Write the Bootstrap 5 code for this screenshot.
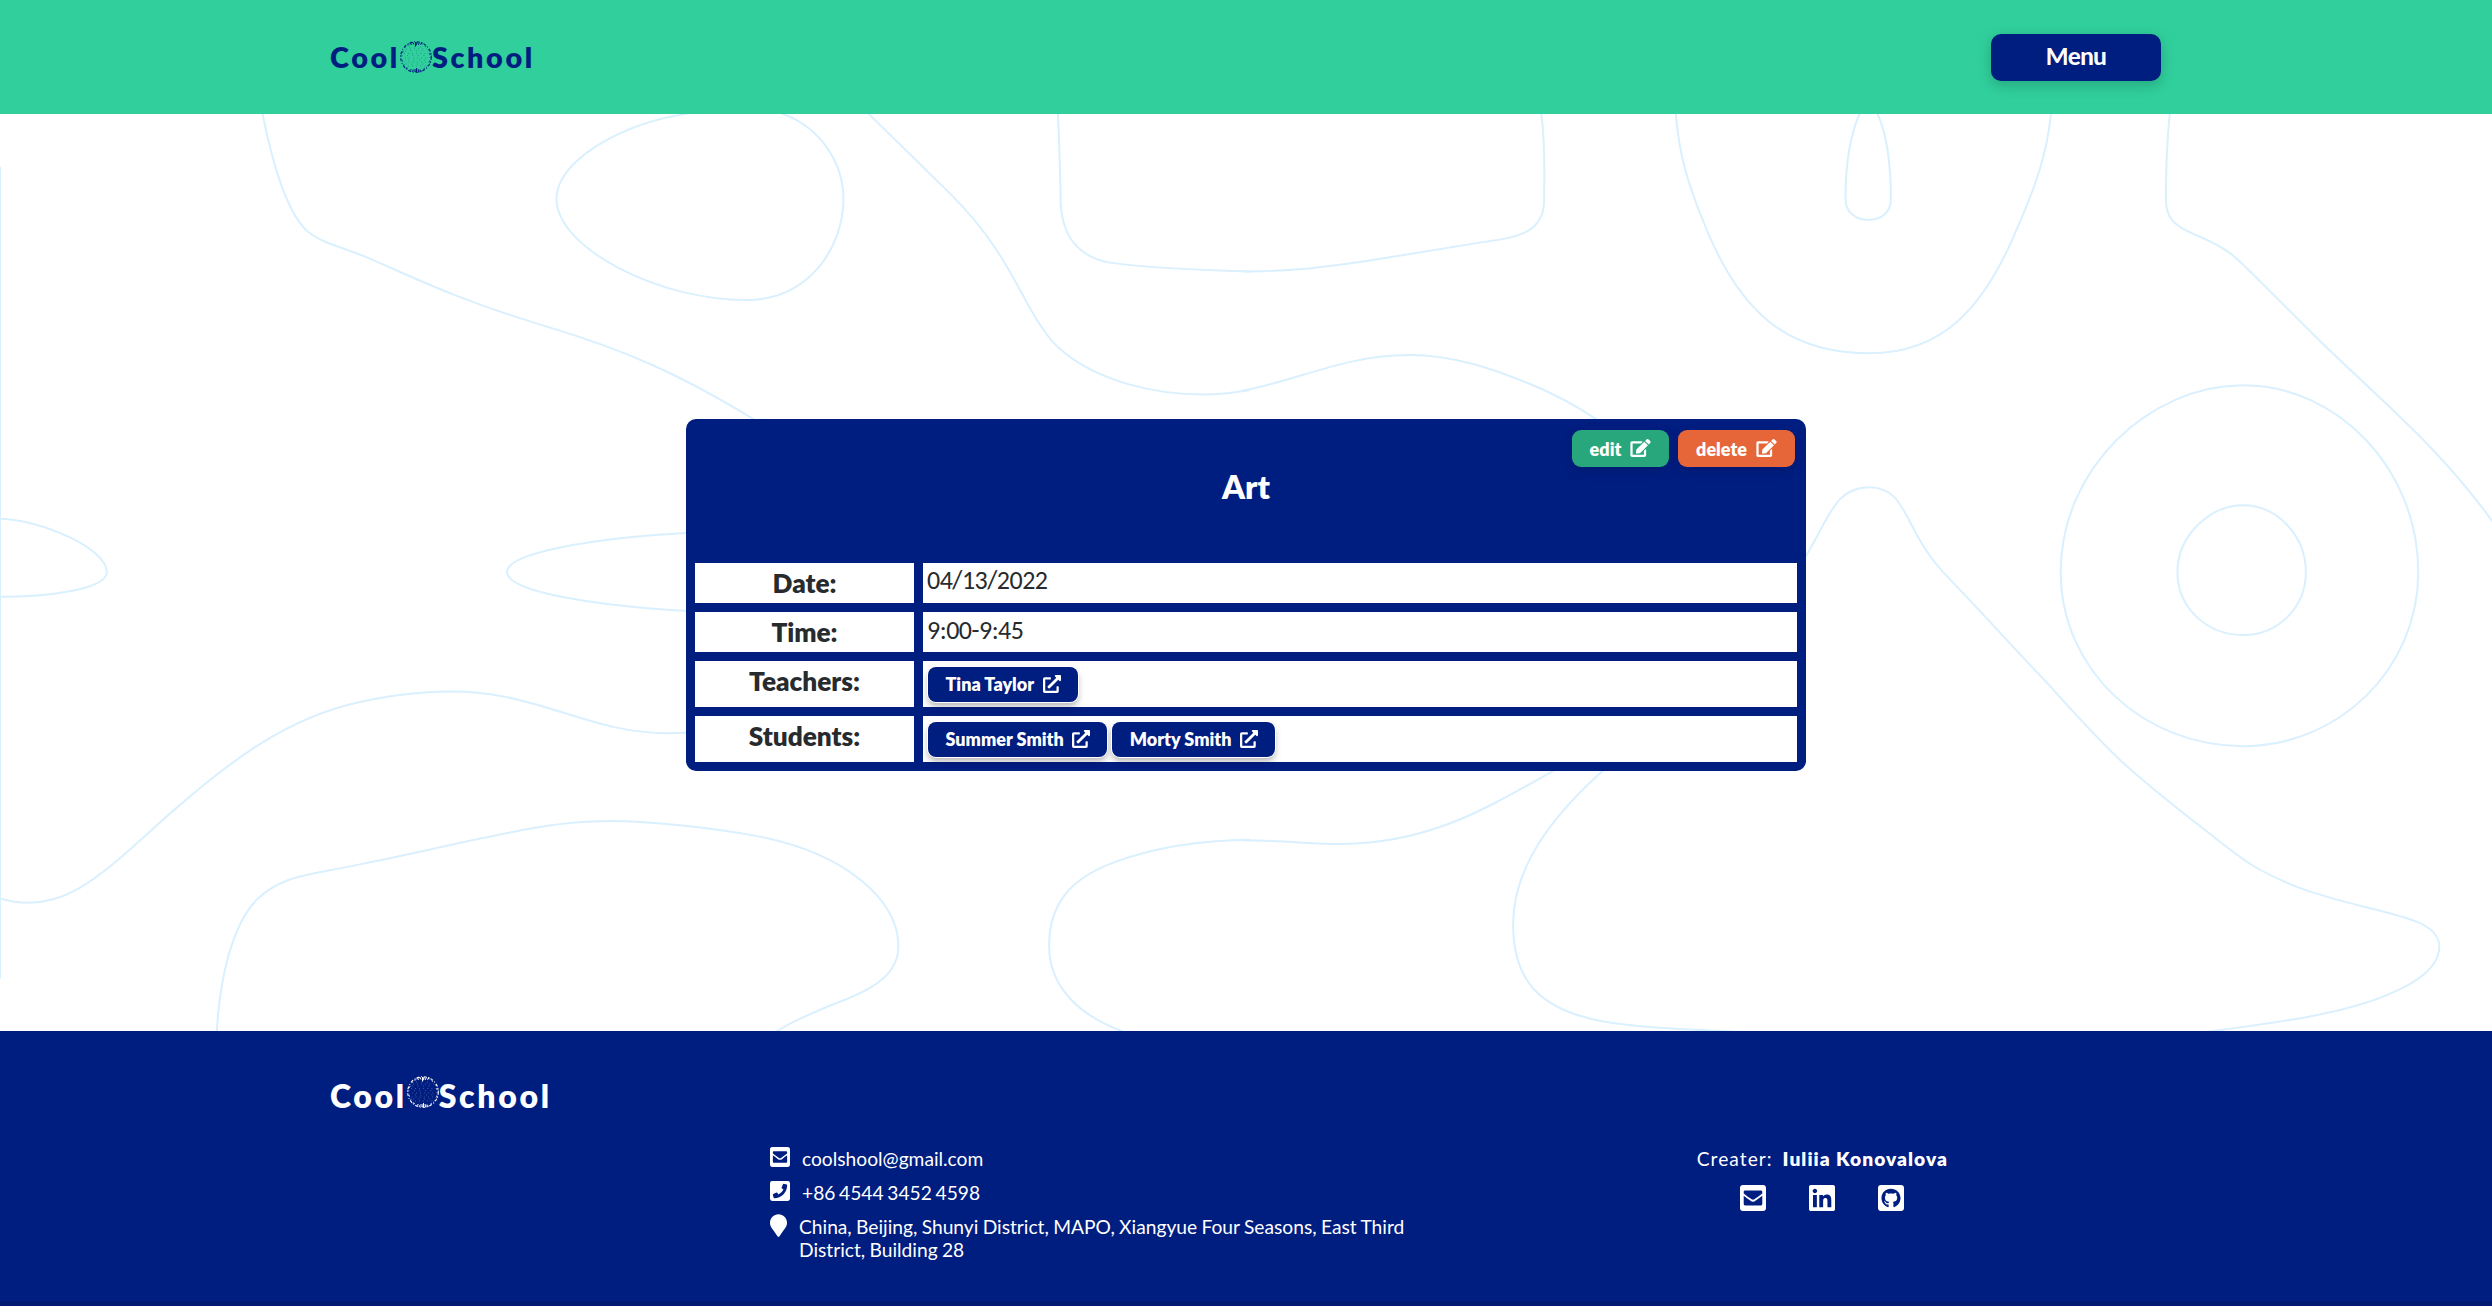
<!DOCTYPE html>
<html lang="en">
<head>
<meta charset="utf-8">
<title>Cool School</title>
<link href="https://cdn.jsdelivr.net/npm/bootstrap@5.3.0/dist/css/bootstrap.min.css" rel="stylesheet">
<style>
:root{--navy:#001d80;--green:#30cf9b}
html,body{height:100%}
body{font-family:Lato,"Liberation Sans",sans-serif;color:#282b2e;overflow:hidden}
.wrap{width:1830px;margin:0 auto}
.site-head{background:var(--green);height:114px}
.brand{font-weight:800;line-height:34px;color:var(--navy);text-decoration:none;font-size:28.8px;letter-spacing:2.6px;margin-left:-1px}
.brand .globe{width:32px;height:32px}
.menu-btn{width:170px;height:47px;background:var(--navy);border-radius:10px;color:#fff;font-family:Carlito,Lato,sans-serif;font-size:26px;letter-spacing:-.8px;line-height:29px;font-weight:700;padding:0 0 2px;border:0;box-shadow:0 4px 14px rgba(0,0,0,.2)}
.stage{height:917px}
.contours{z-index:0;pointer-events:none}
.contours path{fill:none;stroke:#daf0fe;stroke-width:2;vector-effect:non-scaling-stroke}
.lesson{width:1120px;height:352px;margin-top:305px;background:var(--navy);border-radius:10px;padding:0 9px 9px;z-index:1}
.lesson-top{height:144px;padding:11px 2px 0}
.lesson-top h1{font-size:32.5px;font-weight:800;line-height:39px;margin:0}
.lesson-rows,.lesson-rows>div,.lesson-acts{gap:9px}
.lbl{width:219px;background:#fff;font-size:26.2px;font-weight:800;line-height:31px;padding-top:5px}
.val{background:#fff;font-family:Carlito,Lato,sans-serif;font-size:26px;letter-spacing:-.5px;line-height:29px;padding:2.5px 5px 0 4px}
.val-time{padding-top:3.5px}
.short{height:40px}.tall{height:46px}
.pill{height:37px;border-radius:9px;color:#fff;font-weight:800;font-size:18px;line-height:22px;text-decoration:none;box-shadow:0 4px 12px rgba(0,0,0,.13)}
.pill svg{height:18px;margin-left:9px;margin-bottom:1px}
.go{width:97px;background:#28a77c}.stop{width:117px;background:#e76639}
.person{height:35px;border-radius:8px;background:var(--navy);color:#fff;font-family:Lato,sans-serif;font-weight:800;font-size:18px;letter-spacing:0;line-height:21px;padding:0 17px 0 17.5px;text-decoration:none;box-shadow:0 0 0 1px #fff,0 4px 6px rgba(0,0,0,.3)}
.person svg{height:18px;margin-left:8.5px;margin-bottom:1px}
.people{padding:6px 5px;gap:5px}
.site-foot{background:var(--navy);color:#fff;height:275px;border-bottom:5px solid #001a73}
.site-foot .wrap{padding-top:44px}
.site-foot .brand{font-size:32px;letter-spacing:2.65px;line-height:41px;height:40px;color:#fff}
.site-foot .globe{margin-top:1px}
.info{margin-left:439px;width:650px;font-size:19.2px;line-height:23px;margin-top:32px}
.info-line{margin-bottom:11px}
.info svg{flex:none}
.tel{word-spacing:-1.2px}
.addr{word-spacing:-.55px}
.pin-ic{margin-top:-1px}
.maker{margin-top:32px;margin-right:213px;font-size:19.2px;line-height:23px;letter-spacing:1.03px}
.maker strong{font-weight:800}
.maker-links{gap:43px;margin-top:15px}
</style>
<script src="https://cdn.jsdelivr.net/npm/bootstrap@5.3.0/dist/js/bootstrap.bundle.min.js"></script>
</head>
<body class="d-flex flex-column">
<svg width="0" height="0" class="position-absolute" aria-hidden="true">
<symbol id="globe" viewBox="0 0 32 32"><g fill="none" stroke="currentColor">
<circle cx="16" cy="16" r="15.3" stroke-width="1.1" stroke-dasharray="3 1.4 1.5 1 3 1.8 1 1.8"/>
<circle cx="16" cy="16" r="14.200" stroke-width=".8" stroke-dasharray="1 2.6 2 3.4"/>
<path stroke-width="1" d="M10 2.500l2 1M12.500 1l1.500 2.500M15.500 1v4.500M17 1.500l-1 3M19.500 1.500l-1.500 2.500M22 2l-2 1.500M10 29.500l1.500-1.500M12 31l1.500-2.500M15 31v-3M16.500 27v4.500M18.500 31l-.5-3M21.500 30.500l-1.500-2"/>
<g stroke-width=".8" opacity=".4"><path stroke-dasharray=".8 3.300" d="M6 8h21M4 12.500h25M5 17h23M4.500 21h24M8 25h18"/><path stroke-dasharray=".8 4.700" d="M9 6h16M5 10h22M7 14.500h20M8 19h19M6 23h20"/></g></g></symbol>
<symbol id="pen" viewBox="0 0 576 512"><path fill="currentColor" d="M402.6 83.2l90.2 90.2c3.8 3.8 3.8 10 0 13.8L274.4 405.6l-92.8 10.3c-12.4 1.4-22.9-9.1-21.5-21.5l10.3-92.8L388.8 83.2c3.8-3.8 10-3.8 13.8 0zm162-22.9l-48.8-48.8c-15.2-15.2-39.9-15.2-55.2 0l-35.4 35.4c-3.8 3.8-3.8 10 0 13.8l90.2 90.2c3.8 3.8 10 3.8 13.8 0l35.4-35.4c15.2-15.3 15.2-40 0-55.2zM384 346.2V448H64V128h229.8c3.200 0 6.200-1.300 8.500-3.500l40-40c7.600-7.600 2.200-20.500-8.500-20.500H48C21.500 64 0 85.500 0 112v352c0 26.500 21.500 48 48 48h352c26.500 0 48-21.500 48-48V306.200c0-10.700-12.900-16-20.500-8.500l-40 40c-2.200 2.300-3.500 5.300-3.500 8.500z"/></symbol>
<symbol id="ext" viewBox="0 0 512 512"><path fill="currentColor" d="M432,320H400a16,16,0,0,0-16,16V448H64V128H208a16,16,0,0,0,16-16V80a16,16,0,0,0-16-16H48A48,48,0,0,0,0,112V464a48,48,0,0,0,48,48H400a48,48,0,0,0,48-48V336A16,16,0,0,0,432,320ZM488,0h-128c-21.370,0-32.050,25.910-17,41l35.730,35.730L135,320.370a24,24,0,0,0,0,34L157.670,377a24,24,0,0,0,34,0L435.280,133.320,471,169c15,15,41,4.500,41-17V24A24,24,0,0,0,488,0Z"/></symbol>
<symbol id="mail" viewBox="0 32 448 448"><path fill="currentColor" d="M400 32H48C21.490 32 0 53.490 0 80v352c0 26.510 21.490 48 48 48h352c26.510 0 48-21.490 48-48V80c0-26.510-21.490-48-48-48zM178.117 262.104C87.429 196.287 88.353 196.121 64 177.167V152c0-13.255 10.745-24 24-24h272c13.255 0 24 10.745 24 24v25.167c-24.371 18.969-23.434 19.124-114.117 84.938-10.500 7.655-31.392 26.120-45.883 25.894-14.503.218-35.367-18.227-45.883-25.895zM384 217.775V360c0 13.255-10.745 24-24 24H88c-13.255 0-24-10.745-24-24V217.775c13.958 10.794 33.329 25.236 95.303 70.214 14.162 10.341 37.975 32.145 64.697 32.010 26.887.134 51.036-22.041 64.720-32.025 61.958-44.964 81.325-59.406 95.280-70.199z"/></symbol>
<symbol id="phone" viewBox="0 32 448 448"><path transform="translate(448 0) scale(-1 1)" fill="currentColor" d="M400 32H48A48 48 0 0 0 0 80v352a48 48 0 0 0 48 48h352a48 48 0 0 0 48-48V80a48 48 0 0 0-48-48zm-16.390 307.370l-15 65A15 15 0 0 1 354 416C194 416 64 286.290 64 126a15.700 15.700 0 0 1 11.630-14.610l65-15A18.230 18.230 0 0 1 144 96a16.270 16.270 0 0 1 13.790 9.090l30 70A17.900 17.900 0 0 1 189 181a17 17 0 0 1-5.500 11.610l-37.890 31a231.910 231.910 0 0 0 110.780 110.780l31-37.890A17 17 0 0 1 299 291a17.850 17.850 0 0 1 5.910 1.210l70 30A16.250 16.250 0 0 1 384 336a17.410 17.410 0 0 1-.39 3.370z"/></symbol>
<symbol id="pin" viewBox="0 0 384 512"><path fill="currentColor" d="M172.268 501.670C26.970 291.031 0 269.413 0 192 0 85.961 85.961 0 192 0s192 85.961 192 192c0 77.413-26.970 99.031-172.268 309.670-9.535 13.774-29.930 13.773-39.464 0z"/></symbol>
<symbol id="linkedin" viewBox="0 32 448 448"><path fill="currentColor" d="M416 32H31.900C14.300 32 0 46.500 0 64.300v383.400C0 465.500 14.300 480 31.900 480H416c17.600 0 32-14.500 32-32.300V64.300c0-17.800-14.400-32.300-32-32.300zM135.400 416H69V202.200h66.500V416zm-33.200-243c-21.300 0-38.500-17.300-38.500-38.500S80.900 96 102.200 96c21.200 0 38.500 17.300 38.500 38.500 0 21.300-17.200 38.500-38.500 38.500zm282.100 243h-66.400V312c0-24.800-.5-56.700-34.500-56.700-34.600 0-39.900 27-39.900 54.900V416h-66.400V202.200h63.700v29.200h.9c8.900-16.800 30.600-34.500 62.900-34.500 67.200 0 79.700 44.300 79.700 101.900V416z"/></symbol>
<symbol id="github" viewBox="0 32 448 448"><path fill="currentColor" d="M400 32H48C21.500 32 0 53.500 0 80v352c0 26.500 21.500 48 48 48h352c26.500 0 48-21.500 48-48V80c0-26.500-21.500-48-48-48zM277.300 415.700c-8.400 1.500-11.500-3.700-11.500-8 0-5.400.2-33 .2-55.300 0-15.600-5.200-25.500-11.300-30.700 37-4.100 76-9.200 76-73.100 0-18.200-6.500-27.300-17.100-39 1.700-4.300 7.400-22-1.700-45-13.900-4.300-45.700 17.900-45.700 17.900-13.200-3.700-27.500-5.600-41.600-5.600-14.100 0-28.400 1.900-41.600 5.600 0 0-31.800-22.200-45.700-17.900-9.100 22.900-3.500 40.600-1.700 45-10.600 11.700-15.600 20.800-15.600 39 0 63.600 37.300 69 74.300 73.100-4.800 4.300-9.100 11.700-10.600 22.300-9.500 4.300-33.800 11.700-48.300-13.900-9.100-15.800-25.500-17.100-25.500-17.100-16.200-.2-1.100 10.200-1.100 10.200 10.800 5 18.400 24.200 18.400 24.200 9.700 29.700 56.100 19.700 56.100 19.700 0 13.900.2 36.500.2 40.600 0 4.300-3 9.500-11.500 8-66-22.100-112.200-84.900-112.200-158.300 0-91.800 70.200-161.500 162-161.500S388 165.600 388 257.400c.1 73.400-44.700 136.300-110.700 158.300z"/></symbol>
</svg>

<header class="site-head flex-shrink-0">
  <div class="wrap h-100 d-flex align-items-center justify-content-between">
    <a class="brand d-flex align-items-center" href="#"><span>Cool</span><svg class="globe"><use href="#globe"/></svg><span>School</span></a>
    <button class="menu-btn btn" type="button">Menu</button>
  </div>
</header>

<main class="stage position-relative flex-shrink-0 overflow-hidden d-flex justify-content-center align-items-start">
  <svg class="contours position-absolute top-0 start-0" width="2492" height="917" aria-hidden="true">
    <g transform="translate(0 -14) scale(.79719 .60587)">
      <path d="M0 110V1450"/>
      <path d="M329 20C342 110 362 190 386 217C405 238 430 242 466 263C530 300 580 332 686 374C780 411 850 450 948 529"/>
      <path d="M980 22C1030 45 1058 105 1058 163C1058 240 1018 325 943 330C830 334 698 245 698 163C698 100 780 38 865 22"/>
      <path d="M1089 22L1190 152C1240 217 1262 270 1288 334C1300 363 1312 390 1328 409C1375 465 1450 486 1509 486C1532 486 1548 483 1568 478.500"/>
      <path d="M1327 20C1329 80 1330 110 1330.500 165C1331 220 1350 257 1390 268C1430 276 1510 281 1568 283"/>
      <path d="M0 691C50 692 134 740 134 779C134 808 60 820 0 820"/>
      <path d="M870 714C740 723 636 748 636 779C636 812 750 836 870 844"/>
      <path d="M0 1318C25 1328 60 1330 98 1302C140 1270 180 1215 220 1170C290 1090 360 1020 450 994C500 979 570 968 630 984C710 1005 760 1046 840 1045L870 1044"/>
      <path d="M272 1540C275 1450 292 1360 322 1320C353 1280 385 1280 450 1262C510 1247 580 1224 640 1209C690 1195 730 1190 765 1190C820 1190 900 1203 950 1215C1060 1243 1127 1320 1127 1396C1127 1440 1100 1464 1060 1485C1030 1500 995 1520 972 1539"/>
      <path d="M1410 1538C1350 1510 1316 1460 1316 1396C1316 1330 1340 1285 1400 1257C1450 1233 1510 1222 1568 1221"/>
    </g>
    <g transform="translate(1242 -14) scale(.79719 .60587)">
      <path d="M0 283C60 284 110 275 160 265L300 235C345 227 379 220 379 165C379 120 381 70 375 20"/>
      <path d="M0 480C70 463 130 421 209 421C270 421 320 447 360 468C390 484 420 505 448 530"/>
      <path d="M544 20C548 90 560 140 577 195C625 360 690 418 787 418C880 418 930 340 968 225C995 145 1010 90 1015 20"/>
      <path d="M775 22C762 60 757 110 757 163C757 186 770 198 786 198C802 198 814 186 814 163C814 110 810 60 797 22"/>
      <path d="M1164 20C1160 70 1159 110 1159 165C1159 195 1170 208 1195 222C1240 247 1244 257 1270 290L1350 395C1430 498 1500 570 1570 698"/>
      <path d="M1256 471C1375 471 1475.500 610 1475.500 779C1475.500 940 1375 1066.500 1256 1066.500C1130 1066.500 1027 940 1027 779C1027 610 1137 471 1256 471Z"/>
      <path d="M1256 669C1299 669 1334.500 720 1334.500 779C1334.500 838 1299 883 1256 883C1210 883 1173.500 838 1173.500 779C1173.500 720 1213 669 1256 669Z"/>
      <path d="M700 768C735 700 740 639 787 639C835 639 830 710 880 780C940 862 970 908 1010 962C1090 1080 1110 1105 1210 1207C1255 1253 1270 1272 1330 1302C1390 1330 1440 1338 1475 1357C1500 1371 1502 1390 1502 1397C1502 1450 1430 1492 1330 1515C1290 1524 1250 1531 1205 1539"/>
      <path d="M0 1222C60 1222 80 1228 125 1228C240 1226 310 1166 395 1104"/>
      <path d="M455 1104C390 1180 340 1265 340 1362C341 1450 370 1500 450 1520C500 1532 560 1534 640 1539"/>
    </g>
  </svg>

  <section class="lesson position-relative">
    <div class="lesson-top">
      <div class="lesson-acts d-flex justify-content-end">
        <a class="pill go d-flex align-items-center justify-content-center" href="#">edit<svg width="21"><use href="#pen"/></svg></a>
        <a class="pill stop d-flex align-items-center justify-content-center" href="#">delete<svg width="21"><use href="#pen"/></svg></a>
      </div>
      <h1 class="text-white text-center">Art</h1>
    </div>
    <div class="lesson-rows d-flex flex-column">
      <div class="d-flex short"><div class="lbl text-center">Date:</div><div class="val flex-grow-1">04/13/2022</div></div>
      <div class="d-flex short"><div class="lbl text-center">Time:</div><div class="val val-time flex-grow-1">9:00-9:45</div></div>
      <div class="d-flex tall"><div class="lbl text-center">Teachers:</div>
        <div class="val people flex-grow-1 d-flex"><a class="person d-flex align-items-center" href="#">Tina Taylor<svg width="18"><use href="#ext"/></svg></a></div></div>
      <div class="d-flex tall"><div class="lbl text-center">Students:</div>
        <div class="val people flex-grow-1 d-flex"><a class="person d-flex align-items-center" href="#">Summer Smith<svg width="18"><use href="#ext"/></svg></a><a class="person d-flex align-items-center" href="#">Morty Smith<svg width="18"><use href="#ext"/></svg></a></div></div>
    </div>
  </section>
</main>

<footer class="site-foot flex-shrink-0">
  <div class="wrap">
    <a class="brand d-flex align-items-start" href="#"><span>Cool</span><svg class="globe"><use href="#globe"/></svg><span>School</span></a>
    <div class="d-flex justify-content-between">
      <div class="info">
        <div class="info-line d-flex"><svg width="20" height="20" class="me-2"><use href="#mail"/></svg><span class="ps-1">coolshool@gmail.com</span></div>
        <div class="info-line d-flex"><svg width="20" height="20" class="me-2"><use href="#phone"/></svg><span class="tel ps-1">+86 4544 3452 4598</span></div>
        <div class="d-flex"><svg width="17" height="23" class="pin-ic me-2"><use href="#pin"/></svg><span class="addr ps-1">China, Beijing, Shunyi District, MAPO, Xiangyue Four Seasons, East Third<br>District, Building 28</span></div>
      </div>
      <div class="maker">
        <div>Creater: <strong class="ms-1">Iuliia Konovalova</strong></div>
        <div class="maker-links d-flex justify-content-center"><svg width="26" height="26"><use href="#mail"/></svg><svg width="26" height="26"><use href="#linkedin"/></svg><svg width="26" height="26"><use href="#github"/></svg></div>
      </div>
    </div>
  </div>
</footer>
</body>
</html>
